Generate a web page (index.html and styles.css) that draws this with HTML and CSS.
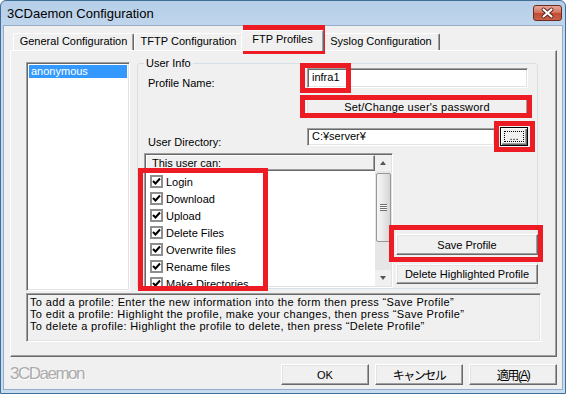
FILE: index.html
```html
<!DOCTYPE html>
<html lang="en">
<head>
  <meta charset="UTF-8" />
  <title>3CDaemon Configuration</title>
  <link rel="stylesheet" href="styles.css">
</head>
<body>
  <div class="window">
    <div class="titlebar">
      <span class="title">3CDaemon Configuration</span>
      <span class="close">
        <svg width="29" height="16" viewBox="0 0 29 16">
          <path d="M10.5 4.5 L18.5 11.5 M18.5 4.5 L10.5 11.5" stroke="#5b2219" stroke-width="4" stroke-linecap="round"/>
          <path d="M10.5 4.5 L18.5 11.5 M18.5 4.5 L10.5 11.5" stroke="#fff" stroke-width="2.2" stroke-linecap="round"/>
        </svg>
      </span>
    </div>

    <div class="client">
      <div class="tabs">
        <div class="tab tab-general">General Configuration</div>
        <div class="tab tab-tftp">TFTP Configuration</div>
        <div class="tab tab-ftp active">FTP Profiles</div>
        <div class="tab tab-syslog">Syslog Configuration</div>
      </div>

      <div class="panel">
        <div class="profile-row">
          <div class="listbox">
            <div class="list-item selected">anonymous</div>
          </div>

          <fieldset class="group">
            <legend>User Info</legend>
            <div class="field-row row-name">
              <span class="field-label">Profile Name:</span>
              <div class="textbox textbox-name">infra1</div>
            </div>
            <div class="field-row row-pass">
              <div class="btn btn-pass">Set/Change user's password</div>
            </div>
            <div class="field-row row-dir">
              <span class="field-label">User Directory:</span>
              <div class="textbox textbox-dir">C:¥server¥</div>
              <div class="btn btn-browse"><span class="focus">...</span></div>
            </div>

            <div class="perm-row">
              <div class="listview">
                <div class="lv-main">
                  <div class="lv-header">This user can:</div>
                  <div class="lv-items">
                    <div class="lv-item"><span class="check"><svg width="9" height="9" viewBox="0 0 9 9"><path d="M1 4 L3.5 6.5 L8 1.5" fill="none" stroke="#000" stroke-width="2"/></svg></span>Login</div>
                    <div class="lv-item"><span class="check"><svg width="9" height="9" viewBox="0 0 9 9"><path d="M1 4 L3.5 6.5 L8 1.5" fill="none" stroke="#000" stroke-width="2"/></svg></span>Download</div>
                    <div class="lv-item"><span class="check"><svg width="9" height="9" viewBox="0 0 9 9"><path d="M1 4 L3.5 6.5 L8 1.5" fill="none" stroke="#000" stroke-width="2"/></svg></span>Upload</div>
                    <div class="lv-item"><span class="check"><svg width="9" height="9" viewBox="0 0 9 9"><path d="M1 4 L3.5 6.5 L8 1.5" fill="none" stroke="#000" stroke-width="2"/></svg></span>Delete Files</div>
                    <div class="lv-item"><span class="check"><svg width="9" height="9" viewBox="0 0 9 9"><path d="M1 4 L3.5 6.5 L8 1.5" fill="none" stroke="#000" stroke-width="2"/></svg></span>Overwrite files</div>
                    <div class="lv-item"><span class="check"><svg width="9" height="9" viewBox="0 0 9 9"><path d="M1 4 L3.5 6.5 L8 1.5" fill="none" stroke="#000" stroke-width="2"/></svg></span>Rename files</div>
                    <div class="lv-item"><span class="check"><svg width="9" height="9" viewBox="0 0 9 9"><path d="M1 4 L3.5 6.5 L8 1.5" fill="none" stroke="#000" stroke-width="2"/></svg></span>Make Directories</div>
                  </div>
                </div>
                <div class="scrollbar">
                  <div class="sb-arrow sb-up"></div>
                  <div class="sb-track">
                    <div class="sb-thumb"><span class="grip"></span></div>
                  </div>
                  <div class="sb-arrow sb-down"></div>
                </div>
              </div>

              <div class="profile-buttons">
                <div class="btn btn-save">Save Profile</div>
                <div class="btn btn-delete">Delete Highlighted Profile</div>
              </div>
            </div>
          </fieldset>
        </div>

        <div class="info">
          <div>To add a profile: Enter the new information into the form then press “Save Profile”</div>
          <div>To edit a profile: Highlight the profile, make your changes, then press “Save Profile”</div>
          <div>To delete a profile: Highlight the profile to delete, then press “Delete Profile”</div>
        </div>
      </div>

      <div class="footer">
        <span class="brand">3CDaemon</span>
        <div class="dialog-buttons">
          <div class="btn btn-dialog">OK</div>
          <div class="btn btn-dialog cjk">キャンセル</div>
          <div class="btn btn-dialog cjk">適用(<u>A</u>)</div>
        </div>
      </div>
    </div>

    <!-- red annotation boxes -->
    <div class="mark mark-tab"></div>
    <div class="mark mark-name"></div>
    <div class="mark mark-pass"></div>
    <div class="mark mark-browse"></div>
    <div class="mark mark-perms"></div>
    <div class="mark mark-save"></div>
  </div>
</body>
</html>
```

FILE: styles.css
```css
* {
  box-sizing: border-box;
}

body {
  margin: 0;
  font-family: "Liberation Sans", "Noto Sans CJK JP", sans-serif;
  font-size: 11px;
  color: #000;
  background: #fff;
}

.window {
  position: relative;
  width: 566px;
  height: 394px;
  display: flex;
  flex-direction: column;
  padding: 0 2px 3px;
  border: 1px solid #3f6f99;
  border-radius: 6px 6px 0 0;
  background: linear-gradient(#b6cee8, #c6daef 40px, #c8dcf0);
  overflow: hidden;
}

.titlebar {
  height: 24px;
  display: flex;
  align-items: center;
  justify-content: space-between;
  padding-left: 4px;
}

.title {
  font-size: 13px;
}

.close {
  width: 29px;
  height: 16px;
  margin-right: 1px;
  border: 1px solid #6b2b20;
  border-radius: 3px;
  background: linear-gradient(#e8a898, #d2705c 50%, #c04a32 51%, #c9634a);
  display: flex;
}

.close svg {
  margin: -1px;
}

.client {
  flex: 1;
  display: flex;
  flex-direction: column;
  background: #f0f0f0;
  border: 1px solid #95adc8;
}

/* tabs */
.tabs {
  height: 24px;
  flex-shrink: 0;
  display: flex;
  align-items: flex-end;
  padding-left: 9px;
}

.tab {
  height: 17px;
  border: 1px solid;
  border-color: #fff #696969 transparent #fff;
  border-bottom: none;
  border-radius: 2px 2px 0 0;
  box-shadow: inset -1px 0 #a0a0a0;
  text-align: center;
  line-height: 15px;
  white-space: nowrap;
}

.tab-general { width: 121px; }
.tab-tftp { width: 109px; }
.tab-ftp { width: 79px; }
.tab-syslog { width: 118px; }

.tab.active {
  position: relative;
  z-index: 1;
  width: 83px;
  height: 21px;
  margin: 0 -2px -1px;
  padding-top: 1px;
  background: #f0f0f0;
}

.panel {
  height: 307px;
  flex-shrink: 0;
  margin: 0 5px 0 6px;
  padding: 6px 15px 0;
  border: 1px solid;
  border-color: #fff #696969 #696969 #fff;
  box-shadow: inset -1px -1px #a0a0a0;
}

.profile-row {
  display: flex;
  align-items: flex-start;
  gap: 7px;
}

.listbox,
.textbox,
.listview,
.info {
  border: 1px solid;
  border-color: #a0a0a0 #fff #fff #a0a0a0;
  box-shadow: inset 1px 1px #696969, inset -1px -1px #e3e3e3;
}

.listbox {
  width: 104px;
  height: 229px;
  margin-top: 5px;
  padding: 2px;
  background: #fff;
}

.list-item {
  height: 13px;
  line-height: 13px;
  padding-left: 2px;
}

.list-item.selected {
  background: #3399ff;
  color: #fff;
}

/* user info group */
.group {
  width: 401px;
  min-width: 0;
  margin: 0;
  padding: 0 9px 0 6px;
  border: 1px solid #d5dfe5;
  border-radius: 3px;
}

.group legend {
  padding: 0 2px;
  line-height: 12px;
}

.field-row {
  display: flex;
  align-items: flex-start;
}

.field-label {
  width: 163px;
  padding-left: 4px;
  margin-top: 9px;
  margin-bottom: -4px;
  line-height: 13px;
}

.row-name {
  margin-top: -1px;
}

.row-pass {
  margin-top: 10px;
}

.row-dir {
  margin-top: 11px;
}

.textbox {
  background: #fff;
  padding-left: 4px;
  white-space: nowrap;
}

.textbox-name {
  width: 221px;
  height: 20px;
  line-height: 17px;
}

.textbox-dir {
  width: 188px;
  height: 18px;
  margin-top: 1px;
  line-height: 15px;
}

.btn {
  display: flex;
  align-items: center;
  justify-content: center;
  background: #f0f0f0;
  border: 1px solid;
  border-color: #fff #696969 #696969 #fff;
  box-shadow: inset -1px -1px #a0a0a0, inset 1px 1px #e3e3e3;
  white-space: nowrap;
}

.btn-pass {
  width: 222px;
  height: 18px;
  margin-left: 162px;
  letter-spacing: 0.2px;
}

.btn-browse {
  width: 28px;
  height: 19px;
  margin-left: 5px;
  border-color: #000;
  box-shadow: inset 1px 1px #fff, inset -1px -1px #696969, inset -2px -2px #a0a0a0;
}

.btn-browse .focus {
  width: 20px;
  height: 11px;
  border: 1px dotted #000;
  line-height: 8px;
  text-align: center;
}

/* permissions list */
.perm-row {
  display: flex;
  margin-top: 7px;
  margin-right: -10px;
  height: 135px;
}

.listview {
  width: 249px;
  height: 135px;
  display: flex;
  padding: 1px;
  background: #fff;
}

.lv-main {
  flex: 1;
  overflow: hidden;
}

.lv-header {
  height: 16px;
  padding-left: 5px;
  line-height: 14px;
  background: #f0f0f0;
  border: 1px solid;
  border-color: #fff #696969 #696969 #fff;
  box-shadow: inset -1px -1px #a0a0a0;
}

.lv-items {
  padding: 2px 0 0 4px;
}

.lv-item {
  height: 17px;
  display: flex;
  align-items: center;
  gap: 3px;
}

.check {
  width: 13px;
  height: 13px;
  border: 2px solid #8e8e8e;
  background: #fff;
  display: flex;
  align-items: center;
  justify-content: center;
}

.scrollbar {
  width: 16px;
  display: flex;
  flex-direction: column;
  background: #ececec;
}

.sb-arrow {
  height: 16px;
  display: flex;
  align-items: center;
  justify-content: center;
  background: #f0f0f0;
}

.sb-up::before,
.sb-down::before {
  content: "";
  border-left: 3.5px solid transparent;
  border-right: 3.5px solid transparent;
}

.sb-up::before {
  border-bottom: 4px solid #555;
}

.sb-down::before {
  border-top: 4px solid #555;
}

.sb-track {
  flex: 1;
  padding: 2px 0 0 1px;
  background: #e6e6e6;
}

.sb-thumb {
  height: 69px;
  border: 1px solid #979797;
  border-radius: 2px;
  background: linear-gradient(90deg, #f6f6f6, #e8e8e8 50%, #d6d6d6);
  display: flex;
  align-items: center;
  justify-content: center;
}

.grip {
  width: 7px;
  height: 7px;
  background: repeating-linear-gradient(#707070 0 1px, #fafafa 1px 2px);
}

.profile-buttons {
  width: 142px;
  margin-left: 3px;
  padding-bottom: 4px;
  display: flex;
  flex-direction: column;
  justify-content: flex-end;
  gap: 9px;
}

.btn-save {
  height: 21px;
}

.btn-delete {
  height: 20px;
}

.info {
  margin-top: 2px;
  height: 49px;
  padding: 2px 3px;
  line-height: 12px;
  letter-spacing: 0.35px;
  white-space: nowrap;
  overflow: hidden;
}

/* footer */
.footer {
  flex: 1;
  display: flex;
  justify-content: space-between;
  align-items: flex-start;
  padding: 7px 5px 0 6px;
}

.brand {
  font-size: 17px;
  line-height: 20px;
  letter-spacing: -1.5px;
  color: #ababab;
  text-shadow: 1px 1px #fff;
}

.dialog-buttons {
  display: flex;
  gap: 6px;
}

.btn-dialog {
  width: 88px;
  height: 21px;
}

.btn-dialog.cjk {
  font-size: 12px;
  letter-spacing: -1.5px;
}

/* red annotation boxes */
.mark {
  position: absolute;
  border: 5px solid #ed1c24;
}

.mark-tab { left: 242px; top: 24px; width: 82px; height: 29px; }
.mark-name { left: 299px; top: 62px; width: 51px; height: 30px; }
.mark-pass { left: 299px; top: 94px; width: 232px; height: 23px; }
.mark-browse { left: 493px; top: 120px; width: 41px; height: 31px; }
.mark-perms { left: 137px; top: 167px; width: 130px; height: 123px; }
.mark-save { left: 388px; top: 224px; width: 154px; height: 37px; }
```
